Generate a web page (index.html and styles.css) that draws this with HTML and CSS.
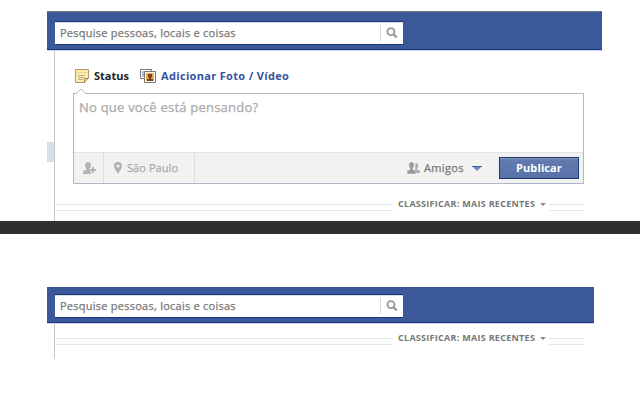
FILE: index.html
```
<!DOCTYPE html>
<html lang="pt-BR">
<head>
<meta charset="utf-8">
<title>Feed</title>
<link rel="stylesheet" href="styles.css">
</head>
<body>
<section class="view view-full">
  <header class="bar bar-lined">
    <div class="search"><span class="search-text"><span class="t-search">Pesquise pessoas, locais e coisas</span></span>
      <span class="search-go"><svg width="12" height="12" viewBox="0 0 12 12"><circle cx="4.9" cy="4.6" r="3.5" fill="none" stroke="#999" stroke-width="1.9"/><path d="M7.5 7.3L10.8 10.4" stroke="#999" stroke-width="2.3"/></svg></span>
    </div>
  </header>
  <main class="feed">
    <span class="marker"></span>
    <nav class="tabs">
      <svg class="note" width="14" height="14" viewBox="0 0 14 14"><path d="M.5.5h13v9l-4 4h-9z" fill="#fbedb8" stroke="#b39a68"/><path d="M1 1h12v2H1z" fill="#ffe9a0"/><path d="M1 3.5h12" stroke="#ead58e"/><path d="M3 6.5h7M3 8.5h6M3 10.5h5" stroke="#c5ae7b"/><path d="M13 9.5H9.5v4" fill="#e9d49c" stroke="#9d8250"/></svg>
      <span class="tab t-status">Status</span>
      <svg class="photo" width="16" height="14" viewBox="0 0 16 14"><path d="M.5.5h11v9H.5z" fill="#fff" stroke="#777"/><path d="M2 2h8v6H2z" fill="#a9bfdf"/><path d="M4.5 2.5h11v11h-11z" fill="#fff" stroke="#777"/><path d="M6 4h8v8H6z" fill="#eda957"/><path d="M8 5h4v3.500h-1V10h2v2H7v-2h2V8.500H8z" fill="#784411"/></svg>
      <span class="tab tab-link t-photo">Adicionar Foto / Vídeo</span>
    </nav>
    <div class="composer">
      <svg class="notch" width="10" height="6" viewBox="0 0 10 6"><path d="M0 6L5 1l5 5" fill="#fff" stroke="#b2b7c8"/></svg>
      <div class="entry"><span class="t-entry">No que você está pensando?</span></div>
      <div class="tools">
        <span class="cell cell-tag"><svg width="14" height="13" viewBox="0 0 14 13"><path d="M5 0C3 0 2 1.300 2 3.200c0 1.500.6 2.600 1.300 3.200v1.300C1 8.500 0 9 0 10v2h8v-2.500L6.500 7.600V6.400C7.400 5.700 8 4.600 8 3.200 8 1.300 7 0 5 0z" fill="#b5b5b5"/><path d="M10 5v6M7 8h6" stroke="#f2f2f2" stroke-width="3.500"/><path d="M10 5v6M7 8h6" stroke="#b5b5b5" stroke-width="2"/></svg></span>
        <span class="cell cell-place"><svg width="8" height="12" viewBox="0 0 8 12"><path fill-rule="evenodd" d="M4 0a4 4 0 0 0-4 4c0 2.500 2.500 5 4 8 1.500-3 4-5.500 4-8a4 4 0 0 0-4-4zm0 2.400a1.600 1.600 0 1 1 0 3.200 1.600 1.600 0 0 1 0-3.200z" fill="#b2b2b2"/></svg><span class="t-place">São Paulo</span></span>
        <span class="audience"><svg width="13" height="12" viewBox="0 0 13 12"><path d="M8.500 1c1.700 0 2.600 1.100 2.600 2.700 0 1.200-.4 2-1.100 2.600v1.200c2 .6 2.900 1 2.900 2V11H8z" fill="#aaa"/><path d="M4.500 0C2.700 0 1.800 1.200 1.800 3c0 1.500.5 2.500 1.200 3.100v1.400C1 8.200 0 8.800 0 10v2h9v-2c0-1.200-1-1.800-3-2.500V6.100C6.700 5.500 7.200 4.500 7.200 3c0-1.800-.9-3-2.700-3z" fill="#999" stroke="#f2f2f2" stroke-width=".5"/></svg><span class="t-friends">Amigos</span><svg class="down" width="10" height="5" viewBox="0 0 10 5"><path d="M0 0h10L5 5z" fill="#6d84bd"/><path d="M0 .5h10" stroke="#4861a3"/></svg></span>
        <span class="publish"><span class="t-publish">Publicar</span></span>
      </div>
    </div>
    <div class="sort sort-full"><i class="rule"></i><span class="label"><span class="t-sort">CLASSIFICAR: MAIS RECENTES</span><svg width="6" height="3" viewBox="0 0 6 3"><path d="M0 0h6L3 3z" fill="#888"/></svg></span><i class="rule rule-end"></i></div>
  </main>
</section>
<div class="divider"></div>
<section class="view view-short">
  <header class="bar bar-short">
    <div class="search"><span class="search-text"><span class="t-search">Pesquise pessoas, locais e coisas</span></span>
      <span class="search-go"><svg width="12" height="12" viewBox="0 0 12 12"><circle cx="4.9" cy="4.6" r="3.5" fill="none" stroke="#999" stroke-width="1.9"/><path d="M7.5 7.3L10.8 10.4" stroke="#999" stroke-width="2.3"/></svg></span>
    </div>
  </header>
  <main class="feed feed-short">
    <div class="sort"><i class="rule"></i><span class="label"><span class="t-sort">CLASSIFICAR: MAIS RECENTES</span><svg width="6" height="3" viewBox="0 0 6 3"><path d="M0 0h6L3 3z" fill="#888"/></svg></span><i class="rule rule-end"></i></div>
  </main>
</section>
</body>
</html>
```
FILE: styles.css
```
* { box-sizing: border-box; }
body { margin: 0; width: 640px; height: 400px; overflow: hidden; background: #fff; font-family: "Open Sans", "Noto Sans", sans-serif; font-size: 11px; line-height: 14px; white-space: nowrap; }
svg { display: block; flex: none; }
.view { padding-left: 47px; }
.view-full { height: 221px; padding-top: 11px; }
.view-short { padding-top: 53px; }
.bar { width: 555px; height: 40px; padding: 9px 0 0 8px; background: #3b5998; border-top: 1px solid #717785; border-bottom: 1px solid #d0d5e5; box-shadow: inset 0 -1px #133783; }
.bar-short { width: 547px; height: 37px; padding-top: 7px; border-top: 0; }
.search { display: flex; width: 348px; height: 24px; border-top: 1px solid #133783; border-bottom: 1px solid #133783; background: #fff; box-shadow: inset 0 1px #dedede; }
.search-text { flex: 1; padding: 4px 0 0 5px; color: #777; letter-spacing: .25px; }
.t-search, .t-entry, .t-place, .t-friends { -webkit-text-stroke: .25px currentColor; }
.search-go { width: 23px; height: 16px; margin-top: 3px; padding: 2px 0 0 5px; border-left: 1px solid #d8d8d8; }
.feed { position: relative; width: 537px; height: 170px; margin-left: 7px; padding: 18px 0 0 19px; border-left: 1px solid #c7c7c7; }
.feed-short { height: 35px; padding: 7px 0 0; }
.marker { position: absolute; left: -8px; top: 91px; width: 7px; height: 20px; background: #d8dfea; }
.tabs { display: flex; align-items: center; height: 14px; margin-left: 1px; font-weight: 700; }
.tab { margin-left: 5px; color: #222; width: 46px; }
.tab-link { color: #3353a0; letter-spacing: .33px; }
.composer { position: relative; width: 511px; height: 91px; margin: 10px 0 0 -1px; border: 1px solid #b2b7c8; }
.notch { position: absolute; left: 2px; top: -6px; }
.entry { height: 58px; padding: 6px 0 0 5px; color: #aaa; font-size: 13px; letter-spacing: .22px; }
.tools { display: flex; height: 31px; border-top: 1px solid #e3e3e3; background: #f2f2f2; }
.cell { display: flex; align-items: center; border-right: 1px solid #dcdcdc; }
.cell-tag { width: 30px; padding-left: 9px; }
.cell-place { width: 91px; padding-left: 10px; gap: 5px; color: #aaa; letter-spacing: .07px; }
.audience { display: flex; align-items: center; width: 92px; margin-left: 212px; gap: 4px; color: #777; }
.t-friends { width: 44px; letter-spacing: .35px; }
.publish { width: 80px; height: 22px; margin-top: 4px; padding-top: 3px; border: 1px solid #1f3872; background: linear-gradient(#8097c4 0 1px, #637bad 1px, #5872a8); color: #fff; font-weight: 700; text-align: center; letter-spacing: .1px; }
.sort { display: flex; width: 529px; align-items: center; color: #777; font-size: 9px; font-weight: 700; }
.sort-full { margin: 12px 0 0 -19px; padding-top: 1px; }
.rule { width: 338px; height: 7px; margin-top: 7px; border-top: 1px solid #e7e7e7; border-bottom: 1px solid #e7e7e7; }
.rule-end { width: 35px; }
.label { display: flex; align-items: center; width: 156px; padding-left: 5px; gap: 4px; }
.t-sort { width: 138px; letter-spacing: .28px; }
.divider { height: 13px; background: #303030; }
```
